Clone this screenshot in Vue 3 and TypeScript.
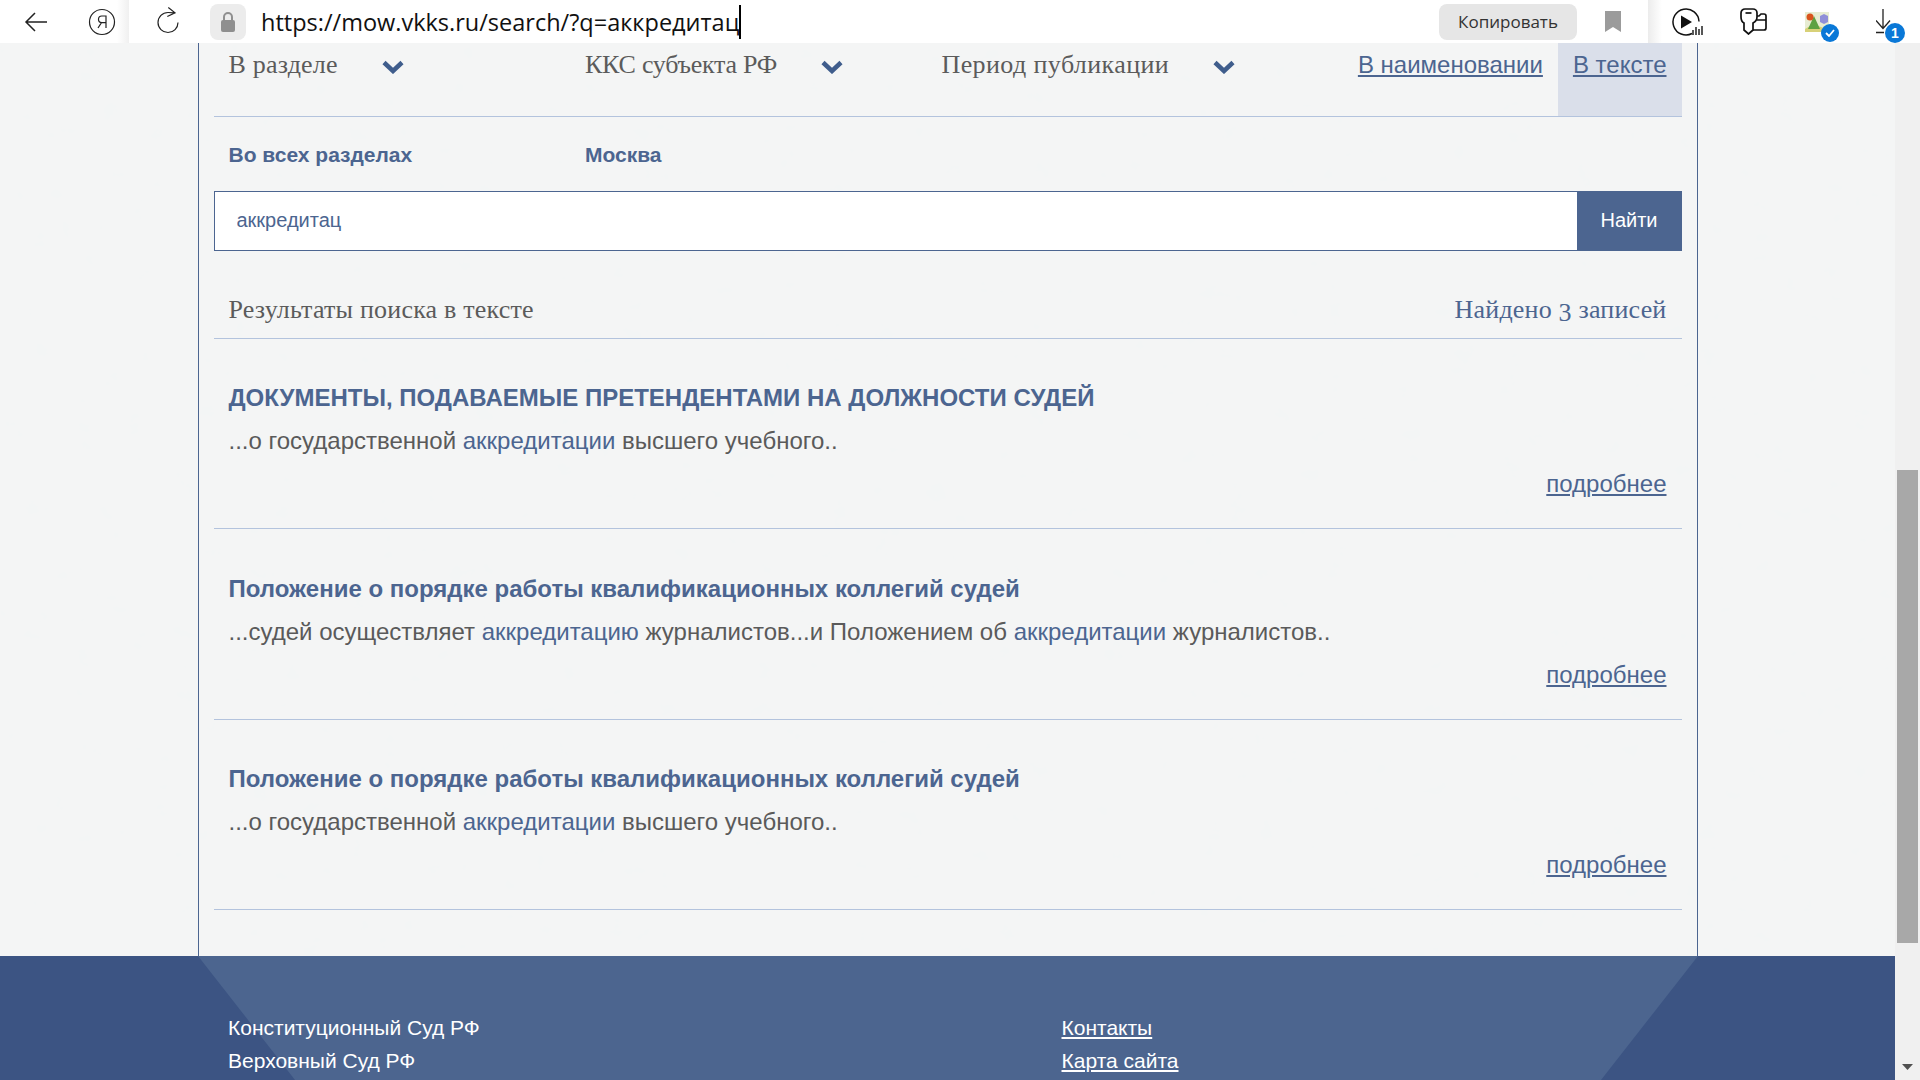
<script setup lang="ts">
interface Part { text: string; hit?: boolean }
interface Result { title: string; parts: Part[] }

const filters: string[] = ['В разделе', 'ККС субъекта РФ', 'Период публикации']
const results: Result[] = [
  {
    title: 'ДОКУМЕНТЫ, ПОДАВАЕМЫЕ ПРЕТЕНДЕНТАМИ НА ДОЛЖНОСТИ СУДЕЙ',
    parts: [{ text: '...о государственной ' }, { text: 'аккредитации', hit: true }, { text: ' высшего учебного..' }],
  },
  {
    title: 'Положение о порядке работы квалификационных коллегий судей',
    parts: [
      { text: '...судей осуществляет ' },
      { text: 'аккредитацию', hit: true },
      { text: ' журналистов...и Положением об ' },
      { text: 'аккредитации', hit: true },
      { text: ' журналистов..' },
    ],
  },
  {
    title: 'Положение о порядке работы квалификационных коллегий судей',
    parts: [{ text: '...о государственной ' }, { text: 'аккредитации', hit: true }, { text: ' высшего учебного..' }],
  },
]
</script>

<template>
  <div class="screen">
    <header class="chrome">
      <div class="nav-icons">
        <svg width="24" height="24" viewBox="0 0 24 24" fill="none" stroke="#222" stroke-width="1.5"><path d="M23 12H2M11 3l-9 9 9 9" /></svg>
        <svg width="28" height="28" viewBox="0 0 28 28" fill="none" stroke="#222" stroke-width="1.2"><circle cx="14" cy="14" r="12.5" /><path d="M18 20V8h-4.200a3.300 3.300 0 0 0 0 6.600H18M13.500 14.600 10 20" /></svg>
        <svg width="24" height="30" viewBox="0 0 24 30" fill="none" stroke="#222" stroke-width="1.2"><path d="M18.500 5.800Q15 5.500 12 5.500A10 10 0 1 0 22 15.500M12.300 .5l6.700 5.300-7.700 3.700" /></svg>
      </div>
      <div class="lock">
        <svg width="16" height="22" viewBox="0 0 16 22"><path d="M4 9V6a4 4 0 0 1 8 0v3" fill="none" stroke="#8f8f8f" stroke-width="2" /><rect x="1" y="9" width="14" height="12" rx="2" fill="#8f8f8f" /></svg>
      </div>
      <div class="address"><span>https://mow.vkks.ru/search/?q=аккредитац</span><i class="caret"></i></div>
      <button class="copy">Копировать</button>
      <svg class="bookmark" width="16" height="21" viewBox="0 0 16 21"><path d="M0 0h16v21l-8-5-8 5z" fill="#9b9b9b" /></svg>
      <div class="tools">
        <svg width="32" height="28" viewBox="0 0 32 28" fill="none" stroke="#111" stroke-width="1.5"><path d="M20 25.500A13 13 0 1 1 27 13.500" /><path d="M9 7.500 20 14 9 20.500z" fill="#111" stroke="none" /><path d="M21 27v-5M24 27v-8M27 27v-6M30 27v-9" stroke-width="1.4" /></svg>
        <svg width="27" height="27" viewBox="0 0 27 27" fill="none" stroke="#111" stroke-width="1.7"><path d="M1 5a4 4 0 0 1 4-4h8a4 4 0 0 1 4 4v4c0 3-2 5-4 6v7l-4.500 4L4 22v-7c-2-1-3-3-3-6z" /><path d="M5.500 5h6" /><path d="M17 8h2l2-2h3a2 2 0 0 1 2 2v12a2 2 0 0 1-2 2H13M17 12h9" /></svg>
        <div class="ext">
          <svg width="24" height="20" viewBox="0 0 24 20"><rect width="24" height="20" fill="#e7ecd2" /><path d="M0 17 8 12l16 6v2H0z" fill="#d8d178" /><path d="M9 4l6 13H3z" fill="#5da142" /><circle cx="5" cy="5" r="3.500" fill="#d9541c" /><path d="M15 4l4-2 4 2v6l-4 2-4-2z" fill="#8f8fd8" /></svg>
          <span class="check"><svg width="10" height="8" viewBox="0 0 10 8" fill="none" stroke="#fff" stroke-width="1.800"><path d="M1 4l3 3 5-6" /></svg></span>
        </div>
        <div class="dl">
          <svg width="22" height="28" viewBox="0 0 22 28" fill="none" stroke="#222" stroke-width="1.300"><path d="M7 2v20M0 13.500l7 8 4-4.500M11 17l3-3.500M0 25.500h8" /></svg>
          <span class="badge">1</span>
        </div>
      </div>
    </header>

    <div class="viewport">
      <svg class="texture" width="100%" height="100%" aria-hidden="true">
        <filter id="paper" x="0" y="0" width="100%" height="100%"><feTurbulence type="fractalNoise" baseFrequency="0.04 0.05" numOctaves="4" seed="4" /><feColorMatrix values="0 0 0 0 0.90  0 0 0 0 0.91  0 0 0 0 0.91  2.6 0 0 0 -1.05" /></filter>
        <rect width="100%" height="100%" fill="#f4f5f5" />
        <rect width="100%" height="100%" filter="url(#paper)" />
      </svg>

      <div class="page">
        <main class="frame">
          <div class="filters">
            <div class="filter-cols">
              <div v-for="f in filters" :key="f" class="filter">
                <span>{{ f }}</span>
                <svg width="22" height="14" viewBox="0 0 22 14" fill="none" stroke="#3f5d8c" stroke-width="4.500"><path d="M2 2.500l9 8.500 9-8.500" /></svg>
              </div>
            </div>
            <div class="scope">
              <a class="scope-link">В наименовании</a>
              <a class="scope-link active">В тексте</a>
            </div>
          </div>

          <div class="chosen">
            <span>Во всех разделах</span>
            <span>Москва</span>
          </div>

          <form class="search" @submit.prevent>
            <input class="search-input" value="аккредитац" />
            <button class="search-btn">Найти</button>
          </form>

          <div class="results-head">
            <span>Результаты поиска в тексте</span>
            <span class="count">Найдено <span class="num">3</span> записей</span>
          </div>

          <article v-for="(r, i) in results" :key="i" class="result">
            <h3 class="title">{{ r.title }}</h3>
            <p class="snippet"><template v-for="(p, j) in r.parts" :key="j"><span v-if="p.hit" class="hit">{{ p.text }}</span><template v-else>{{ p.text }}</template></template></p>
            <div class="more-row"><a class="more">подробнее</a></div>
          </article>
        </main>

        <footer class="footer">
          <div class="footer-shape"></div>
          <div class="footer-cols">
            <ul class="footer-list">
              <li>Конституционный Суд РФ</li>
              <li>Верховный Суд РФ</li>
            </ul>
            <ul class="footer-list links">
              <li><a>Контакты</a></li>
              <li><a>Карта сайта</a></li>
            </ul>
          </div>
        </footer>
      </div>

      <div class="scrollbar">
        <div class="thumb"></div>
        <svg class="arrow" width="11" height="6" viewBox="0 0 11 6"><path d="M0 0h11L5.500 6z" fill="#505050" /></svg>
      </div>
    </div>
  </div>
</template>

<style>
html, body { margin: 0; overflow: hidden; }
</style>

<style scoped>
.screen {
  width: 1920px;
  height: 1080px;
  display: flex;
  flex-direction: column;
  overflow: hidden;
  font-family: "Liberation Sans", Arial, sans-serif;
}
.chrome {
  height: 43px;
  flex: none;
  background: #fff;
  display: flex;
  align-items: center;
  position: relative;
  z-index: 2;
}
.nav-icons {
  width: 210px;
  flex: none;
  display: flex;
  align-items: center;
  box-sizing: border-box;
  padding-left: 24px;
  gap: 40px;
  height: 43px;
  background: linear-gradient(270deg, #f0f0f0 0, #fff 12px) no-repeat 0 0 / 129px 43px;
}
.lock {
  width: 36px;
  height: 36px;
  flex: none;
  border-radius: 8px;
  background: #ececec;
  display: flex;
  align-items: center;
  justify-content: center;
}
.address {
  margin-left: 15px;
  flex: 1;
  display: flex;
  align-items: center;
  font-family: "Open Sans", "Noto Sans", sans-serif;
  font-size: 23.5px;
  color: #111;
  white-space: nowrap;
}
.caret {
  width: 1.5px;
  height: 34px;
  background: #000;
  margin-left: 0;
}
.copy {
  width: 138px;
  height: 36px;
  flex: none;
  border: 0;
  border-radius: 8px;
  background: #e6e6e6;
  color: #333;
  font-family: "Open Sans", "Noto Sans", sans-serif;
  font-size: 17px;
  padding: 0;
}
.bookmark {
  margin-left: 28px;
  margin-right: 27px;
  flex: none;
}
.tools {
  width: 272px;
  height: 43px;
  flex: none;
  box-sizing: border-box;
  padding-left: 24px;
  display: flex;
  align-items: center;
  gap: 36px;
  background: linear-gradient(90deg, #ececec 0, #fff 14px);
}
.ext { position: relative; width: 33px; height: 30px; margin-top: 10px; margin-left: 2px; }
.check {
  position: absolute;
  right: -1px;
  bottom: 0;
  width: 18px;
  height: 18px;
  border-radius: 50%;
  background: #0a78d7;
  display: flex;
  align-items: center;
  justify-content: center;
  box-sizing: border-box;
}
.dl { position: relative; width: 36px; height: 30px; margin-left: 2px; }
.badge {
  position: absolute;
  left: 9px;
  top: 16px;
  width: 20px;
  height: 20px;
  border-radius: 50%;
  background: #0a78d7;
  color: #fff;
  font-size: 14px;
  font-weight: 700;
  text-align: center;
  line-height: 20px;
}
.viewport {
  flex: 1;
  min-height: 0;
  display: flex;
  position: relative;
  overflow: hidden;
}
.texture {
  position: absolute;
  inset: 0;
}
.page {
  width: 1895px;
  flex: none;
  position: relative;
  display: flex;
  flex-direction: column;
}
.frame {
  width: 1500px;
  height: 913px;
  flex: none;
  box-sizing: border-box;
  margin-left: 198px;
  border-left: 1.5px solid #4c6590;
  border-right: 1.5px solid #4c6590;
  padding: 0 15.5px 0 14.5px;
}
.filters {
  height: 74px;
  box-sizing: border-box;
  border-bottom: 1px solid #b3c3dd;
  display: flex;
  justify-content: space-between;
}
.filter-cols {
  display: grid;
  grid-template-columns: repeat(3, 356.5px);
}
.filter {
  padding: 9px 0 0 15px;
  display: flex;
  align-items: flex-start;
  gap: 44px;
  font-family: "Liberation Serif", serif;
  font-size: 26px;
  letter-spacing: 0.2px;
  line-height: 26px;
  color: #5b5b5b;
  white-space: nowrap;
}
.filter:nth-child(2) { letter-spacing: -0.25px; }
.filter:nth-child(3) { letter-spacing: 0.4px; }
.filter svg { margin-top: 8px; }
.scope { display: flex; font-size: 24px; }
.scope-link {
  padding: 8px 15px 0;
  color: #4c6590;
  text-decoration: underline;
  line-height: 27px;
}
.active { background: #dadfea; }
.chosen {
  display: grid;
  grid-template-columns: repeat(3, 356.5px);
  height: 74px;
  box-sizing: border-box;
  padding-top: 26px;
  font-size: 21px;
  line-height: 24px;
  font-weight: 700;
  color: #4c6590;
}
.chosen span { padding-left: 15px; }
.search {
  display: flex;
  height: 60px;
  margin: 0;
}
.search-input {
  flex: 1;
  min-width: 0;
  box-sizing: border-box;
  border: 1px solid #4c6590;
  border-right: 0;
  background: #fff;
  padding: 0 0 2px 22px;
  font-family: "Liberation Sans", Arial, sans-serif;
  font-size: 20px;
  color: #4c6590;
  outline: none;
  border-radius: 0;
}
.search-btn {
  width: 105px;
  flex: none;
  border: 0;
  background: #4c6590;
  color: #fff;
  font-family: "Liberation Sans", Arial, sans-serif;
  font-size: 20px;
  padding: 0 0 2px;
}
.results-head {
  height: 88px;
  box-sizing: border-box;
  border-bottom: 1px solid #b3c3dd;
  padding: 45px 15px 0;
  display: flex;
  justify-content: space-between;
  font-family: "Liberation Serif", serif;
  font-size: 26px;
  letter-spacing: 0.2px;
  line-height: 28px;
  color: #5b5b5b;
}
.count { color: #4c6590; }
.num { position: relative; top: 3px; }
.result {
  height: 190.33px;
  box-sizing: border-box;
  border-bottom: 1px solid #b3c3dd;
  padding: 44px 15px 0;
}
.result:nth-of-type(2) { padding-top: 45px; }
.title {
  margin: 0;
  font-size: 24px;
  line-height: 30px;
  font-weight: 700;
  color: #4c6590;
}
.snippet {
  margin: 13px 0 0;
  font-size: 24px;
  line-height: 30px;
  color: #5a5a5a;
}
.hit { color: #4c6590; }
.more-row {
  margin-top: 13px;
  text-align: right;
  font-size: 24px;
  line-height: 30px;
}
.more { color: #4c6590; text-decoration: underline; }
.footer {
  flex: 1;
  position: relative;
  background: #3c5483;
  color: #fff;
  overflow: hidden;
}
.footer-shape {
  position: absolute;
  left: 198px;
  top: 0;
  width: 1500px;
  height: 124px;
  background: #4c658f;
  clip-path: polygon(0 0, 100% 0, 1403px 100%, 97px 100%);
}
.footer-cols {
  position: relative;
  display: flex;
  padding: 55px 0 0 228px;
}
.footer-list {
  list-style: none;
  margin: 0;
  padding: 0;
  width: 849px;
  font-size: 21px;
  line-height: 33px;
}
.footer-list:first-child { width: 849px; }
.links { padding-left: 0; margin-left: 0; }
.links a { color: #fff; text-decoration: underline; }
.scrollbar {
  width: 25px;
  flex: none;
  position: relative;
  background: #f0f0f0;
  box-sizing: border-box;
  padding: 427px 2px 0 2px;
}
.thumb {
  height: 473px;
  background: #a8a8a8;
}
.arrow {
  position: absolute;
  left: 7px;
  bottom: 10px;
}
</style>
